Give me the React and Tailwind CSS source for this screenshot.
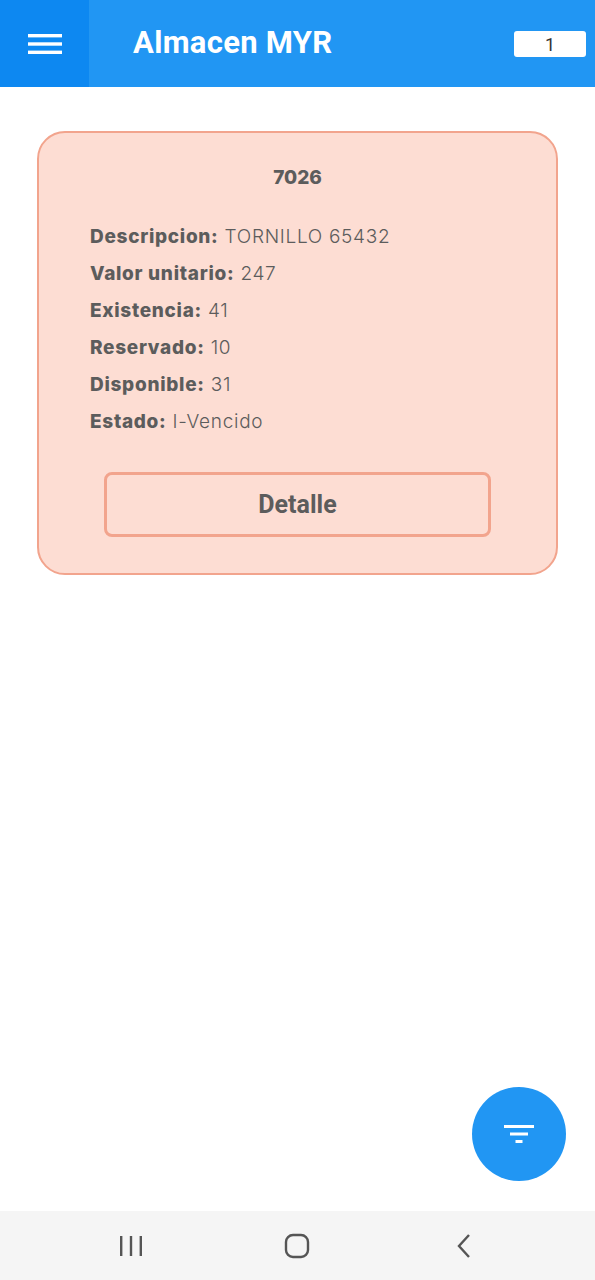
import React from "react";

export default function App() {
  const rows = [
    ["Descripcion:", "TORNILLO 65432"],
    ["Valor unitario:", "247"],
    ["Existencia:", "41"],
    ["Reservado:", "10"],
    ["Disponible:", "31"],
    ["Estado:", "I-Vencido"],
  ];
  return (
    <div className="w-[595px] h-[1280px] bg-white flex flex-col relative overflow-hidden" style={{ fontFamily: "Roboto, sans-serif" }}>
      <header className="h-[87px] bg-[#2196F3] flex items-stretch shrink-0">
        <div className="w-[89px] bg-[#0D88F1] flex items-center justify-center">
          <svg width="34" height="24" viewBox="0 0 34 24">
            <rect x="0" y="2" width="34" height="3.4" fill="white" />
            <rect x="0" y="10.3" width="34" height="3.4" fill="white" />
            <rect x="0" y="18.6" width="34" height="3.4" fill="white" />
          </svg>
        </div>
        <div className="flex-1 flex items-center pl-[44px] pr-[9px]">
          <div className="text-white text-[31px] font-bold tracking-[0.3px]">Almacen MYR</div>
          <div className="ml-auto w-[72px] h-[26px] bg-white rounded-[3px] flex items-center justify-center text-[#333] text-[18px] mt-[1px]">1</div>
        </div>
      </header>

      <main className="flex-1 px-[37px] pt-[44px]">
        <div className="w-[521px] rounded-[28px] border-2 border-[#F2A48D] bg-[#FDDDD3] pt-[30px] pb-[36px] flex flex-col" style={{ fontFamily: "Inter, 'Open Sans', sans-serif" }}>
          <div className="text-center text-[19px] font-extrabold text-[#5C5C5C] leading-[30px]">7026</div>
          <div className="mt-[25px] pl-[51px] flex flex-col">
            {rows.map(([k, v]) => (
              <div key={k} className="text-[19px] leading-[37px] text-[#5C5C5C] tracking-[0.7px]">
                <span className="font-extrabold">{k}</span> <span className="font-light">{v}</span>
              </div>
            ))}
          </div>
          <div className="mt-[32px] flex justify-center">
            <div className="w-[387px] h-[65px] border-[3px] border-[#F2A48D] rounded-[8px] flex items-center justify-center text-[25px] font-bold text-[#5C5C5C]" style={{ fontFamily: "Roboto, sans-serif" }}>
              Detalle
            </div>
          </div>
        </div>
      </main>

      <div className="absolute left-[472px] top-[1087px] w-[94px] h-[94px] rounded-full bg-[#2196F3] flex items-center justify-center">
        <svg width="32" height="24" viewBox="0 0 32 24">
          <rect x="1" y="3" width="30" height="3" fill="white" />
          <rect x="7" y="10.5" width="18" height="3" fill="white" />
          <rect x="12.5" y="18" width="7" height="3" fill="white" />
        </svg>
      </div>

      <nav className="h-[69px] bg-[#F5F5F5] flex items-center shrink-0 pl-[48px]">
        <div className="w-[166px] flex justify-center">
          <svg width="24" height="22" viewBox="0 0 24 22">
            <rect x="1" y="1" width="2.4" height="20" fill="#555" />
            <rect x="10.8" y="1" width="2.4" height="20" fill="#555" />
            <rect x="20.6" y="1" width="2.4" height="20" fill="#555" />
          </svg>
        </div>
        <div className="w-[166px] flex justify-center">
          <svg width="26" height="26" viewBox="0 0 26 26">
            <rect x="2" y="2" width="22" height="22" rx="7" fill="none" stroke="#555" strokeWidth="2.4" />
          </svg>
        </div>
        <div className="w-[167px] flex justify-center">
          <svg width="18" height="26" viewBox="0 0 18 26">
            <path d="M14 2 L4 13 L14 24" fill="none" stroke="#555" strokeWidth="2.4" />
          </svg>
        </div>
      </nav>
    </div>
  );
}
